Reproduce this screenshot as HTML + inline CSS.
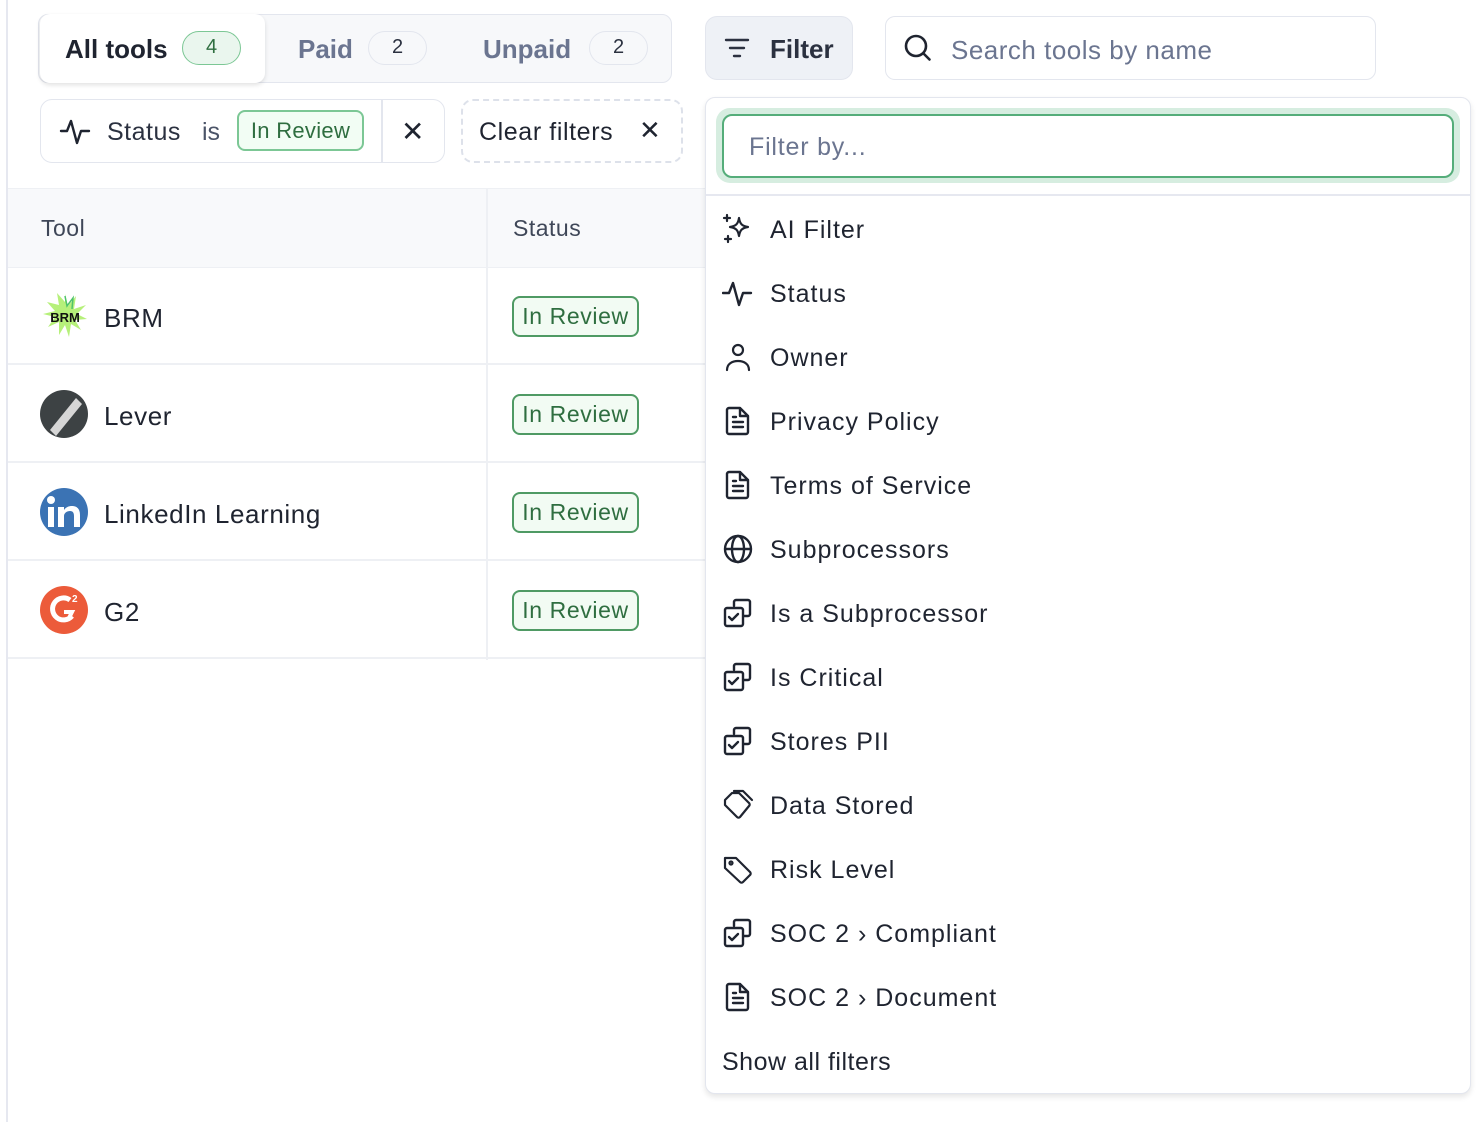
<!DOCTYPE html>
<html><head><meta charset="utf-8"><style>
*{box-sizing:border-box;margin:0;padding:0}
body{width:1482px;height:1122px;background:#fff;font-family:"Liberation Sans",sans-serif;color:#1f2430;position:relative;overflow:hidden}
.abs{position:absolute}
.vline{left:6px;top:0;width:2px;height:1122px;background:#e6e8f0}
.seg{left:38px;top:14px;width:634px;height:69px;background:#f7f8fa;border:1.5px solid #e3e6ee;border-radius:10px}
.segact{left:40px;top:14px;width:225px;height:69px;background:#fff;border-radius:10px;box-shadow:0 2px 5px rgba(0,0,0,.12)}
.t{position:absolute;white-space:nowrap}
.cnt{position:absolute;height:34px;border-radius:17px;border:1.5px solid #e3e6ee;font-size:20px;text-align:center;line-height:31px;color:#2b3140}
.chip{left:40px;top:99px;width:405px;height:64px;border:1.5px solid #e3e6ee;border-radius:12px}
.clear{left:461px;top:99px;width:222px;height:64px;border:2px dashed #dde1ea;border-radius:12px}
.badge{position:absolute;border:2px solid #4f9a64;background:#f2fbf3;color:#2f6e40;border-radius:8px;font-size:23px;text-align:center;letter-spacing:.6px}
.thead{left:8px;top:188px;width:700px;height:80px;background:#f8f9fb;border-top:1.5px solid #eef0f4;border-bottom:1.5px solid #eef0f4}
.row{left:8px;width:700px;height:98px;border-bottom:2px solid #eef0f4}
.cdiv{left:486px;top:188px;width:1.5px;height:472px;background:#eef0f4}
.dd{left:705px;top:97px;width:766px;height:997px;background:#fff;border:1.5px solid #e3e6ee;border-radius:10px;box-shadow:0 3px 6px rgba(0,0,0,.1)}
.item{position:absolute;left:770px;font-size:25px;color:#1f2430;letter-spacing:1px}
.ic{position:absolute;left:722px;width:32px;height:32px}
.name{font-size:26px;letter-spacing:.6px}
</style></head><body>
<div class="abs vline"></div>
<div class="abs seg"></div>
<div class="abs segact"></div>
<div class="t" style="left:65px;top:34px;font-size:26px;font-weight:bold;color:#1f2430">All tools</div>
<div class="cnt" style="left:182px;top:31px;width:59px;background:#eaf6ee;border-color:#7cc795;color:#2f6e40">4</div>
<div class="t" style="left:298px;top:34px;font-size:26px;font-weight:bold;color:#6b7590">Paid</div>
<div class="cnt" style="left:368px;top:31px;width:59px">2</div>
<div class="t" style="left:483px;top:34px;font-size:26px;font-weight:bold;color:#6b7590">Unpaid</div>
<div class="cnt" style="left:589px;top:31px;width:59px">2</div>

<div class="abs" style="left:705px;top:16px;width:148px;height:64px;background:#eef1f6;border:1.5px solid #e3e6ee;border-radius:12px"></div>
<svg class="abs" style="left:723px;top:36px" width="28" height="24" viewBox="0 0 28 24" fill="none" stroke="#2b3140" stroke-width="2.4" stroke-linecap="round"><path d="M3 4h22M7 12h14M11 20h6"/></svg>
<div class="t" style="left:770px;top:34px;font-size:26px;font-weight:bold;color:#2b3140">Filter</div>
<div class="abs" style="left:885px;top:16px;width:491px;height:64px;border:1.5px solid #e3e6ee;border-radius:10px"></div>
<svg class="abs" style="left:902px;top:32px" width="32" height="32" viewBox="0 0 32 32" fill="none" stroke="#1f2430" stroke-width="2.6" stroke-linecap="round"><circle cx="14" cy="14" r="10"/><path d="M21.5 21.5l6 6"/></svg>
<div class="t" style="left:951px;top:35px;font-size:26px;color:#6b7590;letter-spacing:.5px">Search tools by name</div>

<div class="abs chip"></div>
<div class="abs" style="left:381px;top:100px;width:1.5px;height:62px;background:#e3e6ee"></div>
<svg class="abs" style="left:59px;top:117px" width="32" height="30" viewBox="0 0 32 30" fill="none" stroke="#1f2430" stroke-width="2.4" stroke-linejoin="round" stroke-linecap="round"><path d="M2 14h6l4-10 6 22 4-12h8"/></svg>
<div class="t" style="left:107px;top:118px;font-size:25px;color:#2b3140;letter-spacing:.5px">Status</div>
<div class="t" style="left:202px;top:118px;font-size:25px;color:#4b5468">is</div>
<div class="badge" style="left:237px;top:110px;width:127px;height:41px;line-height:37px;border-color:#7cc795;background:#f2fdf4;font-size:22px;letter-spacing:.3px">In Review</div>
<div class="t" style="left:401px;top:115px;font-size:28px;color:#1f2430">✕</div>
<div class="abs clear"></div>
<div class="t" style="left:479px;top:118px;font-size:25px;color:#1f2430;letter-spacing:.6px">Clear filters</div>
<div class="t" style="left:639px;top:115px;font-size:26px;color:#1f2430">✕</div>

<div class="abs thead"></div>
<div class="t" style="left:41px;top:215px;font-size:23px;color:#3f4758;letter-spacing:.5px">Tool</div>
<div class="t" style="left:513px;top:215px;font-size:23px;color:#3f4758;letter-spacing:.5px">Status</div>
<div class="abs row" style="top:267px"></div>
<div class="abs row" style="top:365px"></div>
<div class="abs row" style="top:463px"></div>
<div class="abs row" style="top:561px"></div>
<div class="abs cdiv"></div>

<svg class="abs" style="left:40px;top:292px" width="50" height="46" viewBox="0 0 50 46"><path d="M25 2l3 12 8-10-2 13 12-4-9 9 10 5-12 1 6 10-10-6-2 13-4-12-6 10 0-13-11 5 7-10-12-3 12-3-8-9 12 3-2-12 8 9z" fill="#b6f07a"/><path d="M25 4l2 10 6-8-1 11" fill="none" stroke="#4fc36a" stroke-width="1.5"/><text x="25" y="30" text-anchor="middle" font-family="Liberation Sans" font-weight="bold" font-size="13" fill="#111">BRM</text></svg>
<div class="t name" style="left:104px;top:303px">BRM</div>
<svg class="abs" style="left:40px;top:390px" width="48" height="48" viewBox="0 0 48 48"><circle cx="24" cy="24" r="24" fill="#3d4244"/><path d="M10 40L36 8l6 6-26 32z" fill="#d6d6d6"/></svg>
<div class="t name" style="left:104px;top:401px">Lever</div>
<svg class="abs" style="left:40px;top:488px" width="48" height="48" viewBox="0 0 48 48"><circle cx="24" cy="24" r="24" fill="#3b73b4"/><rect x="8" y="19" width="6" height="20" fill="#fff"/><circle cx="11" cy="12" r="4" fill="#fff"/><path d="M18 19h6v3c2-3 5-4 8-4 5 0 8 3 8 9v12h-6V28c0-3-1-5-4-5s-6 2-6 5v11h-6z" fill="#fff"/></svg>
<div class="t name" style="left:104px;top:499px">LinkedIn Learning</div>
<svg class="abs" style="left:40px;top:586px" width="48" height="48" viewBox="0 0 48 48"><circle cx="24" cy="24" r="24" fill="#ec5b3a"/><path d="M30 14a11 11 0 1 0 2 16" fill="none" stroke="#fff" stroke-width="5"/><path d="M24 26h8l-4 8" fill="none" stroke="#fff" stroke-width="4"/><text x="32" y="16" font-family="Liberation Sans" font-weight="bold" font-size="10" fill="#fff">2</text></svg>
<div class="t name" style="left:104px;top:597px">G2</div>

<div class="badge" style="left:512px;top:296px;width:127px;height:41px;line-height:37px">In Review</div>
<div class="badge" style="left:512px;top:394px;width:127px;height:41px;line-height:37px">In Review</div>
<div class="badge" style="left:512px;top:492px;width:127px;height:41px;line-height:37px">In Review</div>
<div class="badge" style="left:512px;top:590px;width:127px;height:41px;line-height:37px">In Review</div>

<div class="abs dd"></div>
<div class="abs" style="left:716px;top:108px;width:744px;height:75px;background:#d6ede0;border-radius:14px"></div>
<div class="abs" style="left:722px;top:114px;width:732px;height:64px;background:#fff;border:2px solid #55ad7a;border-radius:10px"></div>
<div class="t" style="left:749px;top:133px;font-size:25px;color:#6b7590;letter-spacing:.8px">Filter by...</div>
<div class="abs" style="left:706px;top:194px;width:764px;height:1.5px;background:#e6e8f0"></div>

<svg class="ic" style="top:213px" viewBox="0 0 32 32" fill="none" stroke="#1f2430" stroke-width="2.2" stroke-linejoin="round" stroke-linecap="round"><path d="M17 5c1 6 3 8 9 9-6 1-8 3-9 9-1-6-3-8-9-9 6-1 8-3 9-9z"/><path d="M5 2v6M2 5h6M6 23v6M3 26h6"/></svg>
<div class="item" style="top:216px">AI Filter</div>
<svg class="ic" style="top:277px" viewBox="0 0 32 32" fill="none" stroke="#1f2430" stroke-width="2.4" stroke-linejoin="round" stroke-linecap="round"><path d="M1 16h6l4-10 6 22 4-12h8"/></svg>
<div class="item" style="top:280px">Status</div>
<svg class="ic" style="top:341px" viewBox="0 0 32 32" fill="none" stroke="#1f2430" stroke-width="2.2" stroke-linecap="round"><circle cx="16" cy="9" r="5"/><path d="M5 29c0-6 5-9 11-9s11 3 11 9"/></svg>
<div class="item" style="top:344px">Owner</div>
<svg class="ic" style="top:405px" viewBox="0 0 32 32" fill="none" stroke="#1f2430" stroke-width="2.4" stroke-linejoin="round" stroke-linecap="round"><path d="M7 3h11l8 8v16a2 2 0 0 1-2 2H7a2 2 0 0 1-2-2V5a2 2 0 0 1 2-2zM18 3v8h8M11 17h10M11 22h10M11 12h3"/></svg>
<div class="item" style="top:408px">Privacy Policy</div>
<svg class="ic" style="top:469px" viewBox="0 0 32 32" fill="none" stroke="#1f2430" stroke-width="2.4" stroke-linejoin="round" stroke-linecap="round"><path d="M7 3h11l8 8v16a2 2 0 0 1-2 2H7a2 2 0 0 1-2-2V5a2 2 0 0 1 2-2zM18 3v8h8M11 17h10M11 22h10M11 12h3"/></svg>
<div class="item" style="top:472px">Terms of Service</div>
<svg class="ic" style="top:533px" viewBox="0 0 32 32" fill="none" stroke="#1f2430" stroke-width="2.4"><circle cx="16" cy="16" r="13"/><ellipse cx="16" cy="16" rx="6" ry="13"/><path d="M3 16h26"/></svg>
<div class="item" style="top:536px">Subprocessors</div>
<svg class="ic" style="top:597px" viewBox="0 0 32 32" fill="none" stroke="#1f2430" stroke-width="2.4" stroke-linejoin="round" stroke-linecap="round"><path d="M12 9V5a2 2 0 0 1 2-2h12a2 2 0 0 1 2 2v12a2 2 0 0 1-2 2h-4"/><rect x="3" y="11" width="18" height="18" rx="2"/><path d="M7 20l3 3 6-6"/></svg>
<div class="item" style="top:600px">Is a Subprocessor</div>
<svg class="ic" style="top:661px" viewBox="0 0 32 32" fill="none" stroke="#1f2430" stroke-width="2.4" stroke-linejoin="round" stroke-linecap="round"><path d="M12 9V5a2 2 0 0 1 2-2h12a2 2 0 0 1 2 2v12a2 2 0 0 1-2 2h-4"/><rect x="3" y="11" width="18" height="18" rx="2"/><path d="M7 20l3 3 6-6"/></svg>
<div class="item" style="top:664px">Is Critical</div>
<svg class="ic" style="top:725px" viewBox="0 0 32 32" fill="none" stroke="#1f2430" stroke-width="2.4" stroke-linejoin="round" stroke-linecap="round"><path d="M12 9V5a2 2 0 0 1 2-2h12a2 2 0 0 1 2 2v12a2 2 0 0 1-2 2h-4"/><rect x="3" y="11" width="18" height="18" rx="2"/><path d="M7 20l3 3 6-6"/></svg>
<div class="item" style="top:728px">Stores PII</div>
<svg class="ic" style="top:789px" viewBox="0 0 32 32" fill="none" stroke="#1f2430" stroke-width="2.2" stroke-linejoin="round" stroke-linecap="round"><path d="M3 11l7-7h7l10 10a2 2 0 0 1 0 3l-9 11a2 2 0 0 1-3 0L3 16z"/><path d="M12 2l9 0 9 9"/></svg>
<div class="item" style="top:792px">Data Stored</div>
<svg class="ic" style="top:853px" viewBox="0 0 32 32" fill="none" stroke="#1f2430" stroke-width="2.2" stroke-linejoin="round" stroke-linecap="round"><path d="M3 5h11l14 14a2 2 0 0 1 0 3l-7 7a2 2 0 0 1-3 0L3 15z"/><circle cx="9" cy="10" r="1.5"/></svg>
<div class="item" style="top:856px">Risk Level</div>
<svg class="ic" style="top:917px" viewBox="0 0 32 32" fill="none" stroke="#1f2430" stroke-width="2.4" stroke-linejoin="round" stroke-linecap="round"><path d="M12 9V5a2 2 0 0 1 2-2h12a2 2 0 0 1 2 2v12a2 2 0 0 1-2 2h-4"/><rect x="3" y="11" width="18" height="18" rx="2"/><path d="M7 20l3 3 6-6"/></svg>
<div class="item" style="top:920px">SOC 2 › Compliant</div>
<svg class="ic" style="top:981px" viewBox="0 0 32 32" fill="none" stroke="#1f2430" stroke-width="2.4" stroke-linejoin="round" stroke-linecap="round"><path d="M7 3h11l8 8v16a2 2 0 0 1-2 2H7a2 2 0 0 1-2-2V5a2 2 0 0 1 2-2zM18 3v8h8M11 17h10M11 22h10M11 12h3"/></svg>
<div class="item" style="top:984px">SOC 2 › Document</div>
<div class="item" style="left:722px;top:1048px;letter-spacing:.5px">Show all filters</div>
</body></html>
